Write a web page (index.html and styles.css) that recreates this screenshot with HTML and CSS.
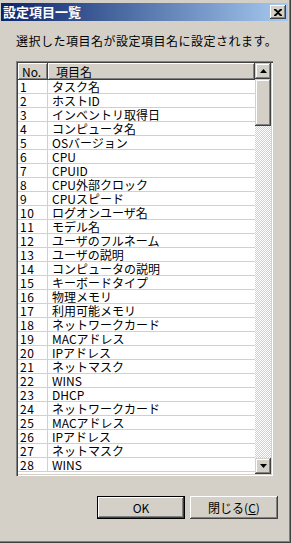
FILE: index.html
```html
<!DOCTYPE html>
<html lang="ja">
<head>
    <meta charset="UTF-8">
    <title>設定項目一覧</title>
    <link rel="stylesheet" href="styles.css">
</head>
<body>
<div class="window">
    <div class="titlebar">
        <span class="title">設定項目一覧</span>
        <span class="close-btn">
            <svg width="8" height="7" viewBox="0 0 8 7"><path d="M0 0h2l2 2 2-2h2v1L5 3.5 8 6v1H6L4 5 2 7H0V6l3-2.5L0 1z" fill="#000"/></svg>
        </span>
    </div>

    <p class="message">選択した項目名が設定項目名に設定されます。</p>

    <div class="listbox">
        <div class="list">
            <div class="header">
                <div class="hcell col-no">No.</div>
                <div class="hcell col-name">項目名</div>
            </div>
            <div class="rows">
                <div class="row"><span class="col-no">1</span><span class="col-name">タスク名</span></div>
                <div class="row"><span class="col-no">2</span><span class="col-name">ホストID</span></div>
                <div class="row"><span class="col-no">3</span><span class="col-name">インベントリ取得日</span></div>
                <div class="row"><span class="col-no">4</span><span class="col-name">コンピュータ名</span></div>
                <div class="row"><span class="col-no">5</span><span class="col-name">OSバージョン</span></div>
                <div class="row"><span class="col-no">6</span><span class="col-name">CPU</span></div>
                <div class="row"><span class="col-no">7</span><span class="col-name">CPUID</span></div>
                <div class="row"><span class="col-no">8</span><span class="col-name">CPU外部クロック</span></div>
                <div class="row"><span class="col-no">9</span><span class="col-name">CPUスピード</span></div>
                <div class="row"><span class="col-no">10</span><span class="col-name">ログオンユーザ名</span></div>
                <div class="row"><span class="col-no">11</span><span class="col-name">モデル名</span></div>
                <div class="row"><span class="col-no">12</span><span class="col-name">ユーザのフルネーム</span></div>
                <div class="row"><span class="col-no">13</span><span class="col-name">ユーザの説明</span></div>
                <div class="row"><span class="col-no">14</span><span class="col-name">コンピュータの説明</span></div>
                <div class="row"><span class="col-no">15</span><span class="col-name">キーボードタイプ</span></div>
                <div class="row"><span class="col-no">16</span><span class="col-name">物理メモリ</span></div>
                <div class="row"><span class="col-no">17</span><span class="col-name">利用可能メモリ</span></div>
                <div class="row"><span class="col-no">18</span><span class="col-name">ネットワークカード</span></div>
                <div class="row"><span class="col-no">19</span><span class="col-name">MACアドレス</span></div>
                <div class="row"><span class="col-no">20</span><span class="col-name">IPアドレス</span></div>
                <div class="row"><span class="col-no">21</span><span class="col-name">ネットマスク</span></div>
                <div class="row"><span class="col-no">22</span><span class="col-name">WINS</span></div>
                <div class="row"><span class="col-no">23</span><span class="col-name">DHCP</span></div>
                <div class="row"><span class="col-no">24</span><span class="col-name">ネットワークカード</span></div>
                <div class="row"><span class="col-no">25</span><span class="col-name">MACアドレス</span></div>
                <div class="row"><span class="col-no">26</span><span class="col-name">IPアドレス</span></div>
                <div class="row"><span class="col-no">27</span><span class="col-name">ネットマスク</span></div>
                <div class="row"><span class="col-no">28</span><span class="col-name">WINS</span></div>
            </div>
        </div>
        <div class="scrollbar">
            <div class="sb-btn">
                <svg width="7" height="4" viewBox="0 0 7 4"><path d="M3.5 0L7 4H0z" fill="#000"/></svg>
            </div>
            <div class="sb-thumb"></div>
            <div class="sb-track"></div>
            <div class="sb-btn">
                <svg width="7" height="4" viewBox="0 0 7 4"><path d="M0 0h7L3.5 4z" fill="#000"/></svg>
            </div>
        </div>
    </div>

    <div class="buttons">
        <button type="button" class="btn btn-default">OK</button>
        <button type="button" class="btn">閉じる(<u>C</u>)</button>
    </div>
</div>
</body>
</html>
```

FILE: styles.css
```css
body {
    margin: 0;
    background: #d4d0c8;
    font-family: "Noto Sans CJK JP", "DejaVu Sans", sans-serif;
    font-size: 12px;
    color: #000;
}
.window {
    width: 291px;
    height: 543px;
    box-sizing: border-box;
    padding: 3px 3px 3px 1px;
    background: #d4d0c8;
    box-shadow: inset -1px -1px #404040, inset -2px -2px #808080;
    display: flex;
    flex-direction: column;
}
.titlebar {
    height: 18px;
    background: linear-gradient(to right, #0a246a, #a6caf0);
    display: flex;
    align-items: center;
    justify-content: space-between;
    padding: 0 2px 0 2px;
}
.title {
    color: #fff;
    font-weight: bold;
    font-size: 13px;
    line-height: 18px;
}
.close-btn {
    width: 16px;
    height: 14px;
    box-sizing: border-box;
    background: #d4d0c8;
    box-shadow: inset -1px -1px #404040, inset 1px 1px #fff, inset -2px -2px #808080;
    display: flex;
    align-items: center;
    justify-content: center;
}
.message {
    margin: 13px 0 0 15px;
    line-height: 14px;
    letter-spacing: 0.5px;
}
.listbox {
    margin: 13px 0 0 15px;
    width: 257px;
    height: 415px;
    box-sizing: border-box;
    padding: 2px;
    background: #fff;
    box-shadow: inset 1px 1px #808080, inset 2px 2px #404040, inset -1px -1px #fff, inset -2px -2px #d4d0c8;
    display: flex;
}
.list {
    flex: 1;
    display: flex;
    flex-direction: column;
    overflow: hidden;
}
.header {
    display: flex;
    height: 17px;
    flex: none;
}
.hcell {
    box-sizing: border-box;
    background: #d4d0c8;
    box-shadow: inset -1px -1px #404040, inset 1px 1px #fff, inset -2px -2px #808080;
    line-height: 17px;
    padding-left: 4px;
}
.hcell.col-name {
    padding-left: 8px;
}
.col-no {
    width: 30px;
    flex: none;
    box-sizing: border-box;
}
.col-name {
    flex: 1;
    box-sizing: border-box;
}
.rows {
    flex: 1;
    overflow: hidden;
}
.row {
    display: flex;
    height: 14px;
    box-sizing: border-box;
    border-bottom: 1px solid #d4d0c8;
    line-height: 13px;
}
.row .col-no {
    padding-left: 2px;
    border-right: 1px solid #d4d0c8;
    letter-spacing: 0.5px;
}
.row .col-name {
    padding-left: 4px;
    white-space: nowrap;
}
.scrollbar {
    width: 16px;
    flex: none;
    display: flex;
    flex-direction: column;
}
.sb-btn, .sb-thumb {
    height: 16px;
    flex: none;
    box-sizing: border-box;
    background: #d4d0c8;
    box-shadow: inset -1px -1px #404040, inset 1px 1px #d4d0c8, inset -2px -2px #808080, inset 2px 2px #fff;
    display: flex;
    align-items: center;
    justify-content: center;
}
.sb-thumb {
    height: 47px;
}
.sb-track {
    flex: 1;
    background: repeating-conic-gradient(#fff 0 25%, #d4d0c8 0 50%) 0 0 / 2px 2px;
}
.buttons {
    display: flex;
    justify-content: flex-end;
    gap: 5px;
    margin: 20px 10px 0 0;
}
.btn {
    width: 88px;
    height: 23px;
    font-family: inherit;
    font-size: 12px;
    color: #000;
    background: #d4d0c8;
    border: none;
    padding: 0;
    box-shadow: inset -1px -1px #404040, inset 1px 1px #fff, inset -2px -2px #808080, inset 2px 2px #d4d0c8;
}
.btn-default {
    border: 1px solid #000;
}
```
